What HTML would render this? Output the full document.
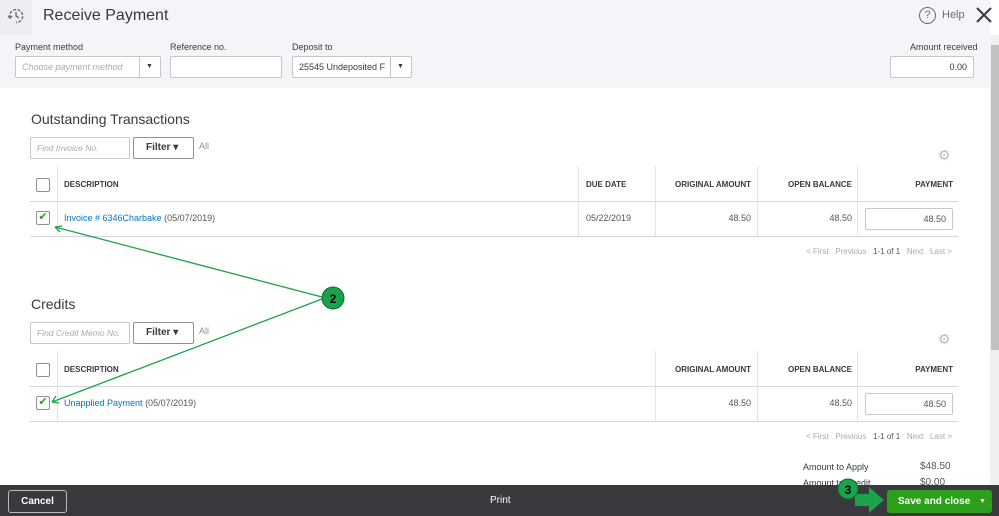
<!DOCTYPE html><html><head><style>
*{box-sizing:border-box;margin:0;padding:0}
body{width:999px;height:516px;overflow:hidden;position:relative;background:#fff;font-family:"Liberation Sans",Arial,sans-serif;color:#393a3d}
.a{position:absolute}
.lbl{font-size:9px;color:#393a3d}
.inp{position:absolute;height:22px;border:1px solid #c4c6ca;background:#fff;font-size:9px;line-height:20px;padding:0 6px;border-radius:2px}
.th{position:absolute;font-size:8px;font-weight:bold;color:#393a3d}
.td{position:absolute;font-size:9px;color:#555}
.link{color:#0077c5}
.vl{position:absolute;width:1px;background:#e3e4e6}
.hl{position:absolute;height:1px;background:#d4d7dc}
.cb{position:absolute;width:14px;height:14px;border:1px solid #8d9096;border-radius:2px;background:#fff}
.btn{position:absolute;height:22px;border:1px solid #8d9096;border-radius:2px;font-size:10px;font-weight:bold;line-height:20px;padding-left:12px;background:#fff}
.pg{position:absolute;font-size:8px;color:#aaa;width:300px;text-align:right}
</style></head><body>
<div class="a" style="left:0;top:0;width:990px;height:88px;background:#f4f5f8"></div>
<div class="a" style="left:0;top:0;width:32px;height:35px;background:#eceef1"></div>
<svg class="a" style="left:7px;top:7px" width="18" height="18" viewBox="0 0 18 18" fill="none" stroke="#6b6c72" stroke-width="1.4"><path d="M3 11A6.5 6.5 0 1 1 9 15.5" stroke-dasharray="3 1.5"/><path d="M9 5v4l3 2"/><path d="M1 9l2 2 2-2"/></svg>
<div class="a" style="left:43px;top:7px;font-size:16px;color:#393a3d">Receive Payment</div>
<div class="a" style="left:919px;top:7px;width:17px;height:17px;border:1.5px solid #6b6c72;border-radius:50%;font-size:11px;text-align:center;line-height:14px;color:#6b6c72">?</div>
<div class="a" style="left:942px;top:9px;font-size:11px;color:#6b6c72">Help</div>
<svg class="a" style="left:975px;top:6px" width="18" height="18"><path d="M2 2L16 16M16 2L2 16" stroke="#393a3d" stroke-width="2"/></svg>
<div class="a lbl" style="left:15px;top:42px">Payment method</div>
<div class="inp" style="left:15px;top:56px;width:146px;color:#aaa;font-style:italic">Choose payment method</div>
<div class="a" style="left:139px;top:57px;width:1px;height:20px;background:#c4c6ca"></div>
<div class="a" style="left:146px;top:63px;font-size:7px">▼</div>
<div class="a lbl" style="left:170px;top:42px">Reference no.</div>
<div class="inp" style="left:170px;top:56px;width:112px"></div>
<div class="a lbl" style="left:292px;top:42px">Deposit to</div>
<div class="inp" style="left:292px;top:56px;width:120px">25545 Undeposited F</div>
<div class="a" style="left:390px;top:57px;width:1px;height:20px;background:#c4c6ca"></div>
<div class="a" style="left:397px;top:63px;font-size:7px">▼</div>
<div class="a lbl" style="left:910px;top:42px">Amount received</div>
<div class="inp" style="left:890px;top:56px;width:84px;text-align:right">0.00</div>
<div class="a" style="left:990px;top:35px;width:9px;height:450px;background:#f0f0f0"></div>
<div class="a" style="left:991px;top:45px;width:8px;height:305px;background:#c1c1c1"></div>

<div class="a" style="left:31px;top:111px;font-size:14px">Outstanding Transactions</div>
<div class="inp" style="left:30px;top:137px;width:100px;color:#aaa;font-style:italic;font-size:8.5px">Find Invoice No.</div>
<div class="btn" style="left:133px;top:137px;width:61px">Filter ▾</div>
<div class="a" style="left:199px;top:141px;font-size:9px;color:#8d9096">All</div>
<div class="a" style="left:938px;top:147px;font-size:14px;color:#bbb">⚙</div>
<div class="hl" style="left:30px;top:201px;width:928px"></div>
<div class="hl" style="left:30px;top:236px;width:928px"></div>
<div class="vl" style="left:57px;top:166px;height:70px"></div>
<div class="vl" style="left:578px;top:166px;height:70px"></div>
<div class="vl" style="left:655px;top:166px;height:70px"></div>
<div class="vl" style="left:757px;top:166px;height:70px"></div>
<div class="vl" style="left:857px;top:166px;height:70px"></div>
<div class="cb" style="left:36px;top:178px"></div>
<div class="th" style="left:64px;top:180px">DESCRIPTION</div>
<div class="th" style="left:586px;top:180px">DUE DATE</div>
<div class="th" style="left:656px;top:180px;width:95px;text-align:right">ORIGINAL AMOUNT</div>
<div class="th" style="left:757px;top:180px;width:95px;text-align:right">OPEN BALANCE</div>
<div class="th" style="left:858px;top:180px;width:95px;text-align:right">PAYMENT</div>
<div class="cb" style="left:36px;top:211px;color:#2ca01c;font-size:11px;line-height:11px;text-align:center">✔</div>
<div class="td" style="left:64px;top:213px"><span class="link">Invoice # 6346Charbake</span> (05/07/2019)</div>
<div class="td" style="left:586px;top:213px">05/22/2019</div>
<div class="td" style="left:656px;top:213px;width:95px;text-align:right">48.50</div>
<div class="td" style="left:757px;top:213px;width:95px;text-align:right">48.50</div>
<div class="inp" style="left:865px;top:208px;width:88px;text-align:right;color:#555">48.50</div>
<div class="pg" style="left:652px;top:247px">&lt; First &nbsp; Previous &nbsp; <span style="color:#555">1-1 of 1</span> &nbsp; Next &nbsp; Last &gt;</div>

<div class="a" style="left:31px;top:296px;font-size:14px">Credits</div>
<div class="inp" style="left:30px;top:322px;width:100px;color:#aaa;font-style:italic;font-size:8.5px">Find Credit Memo No.</div>
<div class="btn" style="left:133px;top:322px;width:61px">Filter ▾</div>
<div class="a" style="left:199px;top:326px;font-size:9px;color:#8d9096">All</div>
<div class="a" style="left:938px;top:331px;font-size:14px;color:#bbb">⚙</div>
<div class="hl" style="left:30px;top:386px;width:928px"></div>
<div class="hl" style="left:30px;top:421px;width:928px"></div>
<div class="vl" style="left:57px;top:351px;height:70px"></div>
<div class="vl" style="left:655px;top:351px;height:70px"></div>
<div class="vl" style="left:757px;top:351px;height:70px"></div>
<div class="vl" style="left:857px;top:351px;height:70px"></div>
<div class="cb" style="left:36px;top:363px"></div>
<div class="th" style="left:64px;top:365px">DESCRIPTION</div>
<div class="th" style="left:656px;top:365px;width:95px;text-align:right">ORIGINAL AMOUNT</div>
<div class="th" style="left:757px;top:365px;width:95px;text-align:right">OPEN BALANCE</div>
<div class="th" style="left:858px;top:365px;width:95px;text-align:right">PAYMENT</div>
<div class="cb" style="left:36px;top:396px;color:#2ca01c;font-size:11px;line-height:11px;text-align:center">✔</div>
<div class="td" style="left:64px;top:398px"><span class="link">Unapplied Payment</span> (05/07/2019)</div>
<div class="td" style="left:656px;top:398px;width:95px;text-align:right">48.50</div>
<div class="td" style="left:757px;top:398px;width:95px;text-align:right">48.50</div>
<div class="inp" style="left:865px;top:393px;width:88px;text-align:right;color:#555">48.50</div>
<div class="pg" style="left:652px;top:432px">&lt; First &nbsp; Previous &nbsp; <span style="color:#555">1-1 of 1</span> &nbsp; Next &nbsp; Last &gt;</div>
<div class="a" style="left:803px;top:462px;font-size:9px">Amount to Apply</div>
<div class="a" style="left:920px;top:461px;font-size:10px;color:#555">$48.50</div>
<div class="a" style="left:803px;top:478px;font-size:9px">Amount to Credit</div>
<div class="a" style="left:920px;top:477px;font-size:10px;color:#555">$0.00</div>

<div class="a" style="left:0;top:485px;width:999px;height:31px;background:#393a3d"></div>
<div class="a" style="left:8px;top:490px;width:59px;height:23px;border:1px solid #bbb;border-radius:3px;color:#fff;font-size:10px;font-weight:bold;text-align:center;line-height:21px">Cancel</div>
<div class="a" style="left:490px;top:495px;color:#fff;font-size:10px">Print</div>
<div class="a" style="left:887px;top:490px;width:105px;height:23px;background:#2ca01c;border-radius:3px;color:#fff;font-size:10px;font-weight:bold;line-height:23px;padding-left:11px">Save and close<span style="position:absolute;left:92px;font-size:7px">▼</span></div>

<svg class="a" style="left:0;top:0" width="999" height="516">
<g stroke="#1aa34a" stroke-width="1.3" fill="none"><path d="M322 297L55 227M322 299L52 402"/><path d="M55 227l7 -1M55 227l5 5M52 402l4-6M52 402l7 1"/></g>
<circle cx="333" cy="298" r="11" fill="#1aa34a" stroke="#0d6b2c"/>
<text x="333" y="303" font-size="12" font-weight="bold" text-anchor="middle" font-family="Liberation Sans">2</text>
<polygon points="855,494 869,494 869,487 884,500 869,513 869,506 855,506" fill="#1aa34a"/>
<circle cx="848" cy="489" r="10" fill="#1aa34a" stroke="#0d6b2c"/>
<text x="848" y="494" font-size="12" font-weight="bold" text-anchor="middle" font-family="Liberation Sans">3</text>
</svg>
</body></html>
